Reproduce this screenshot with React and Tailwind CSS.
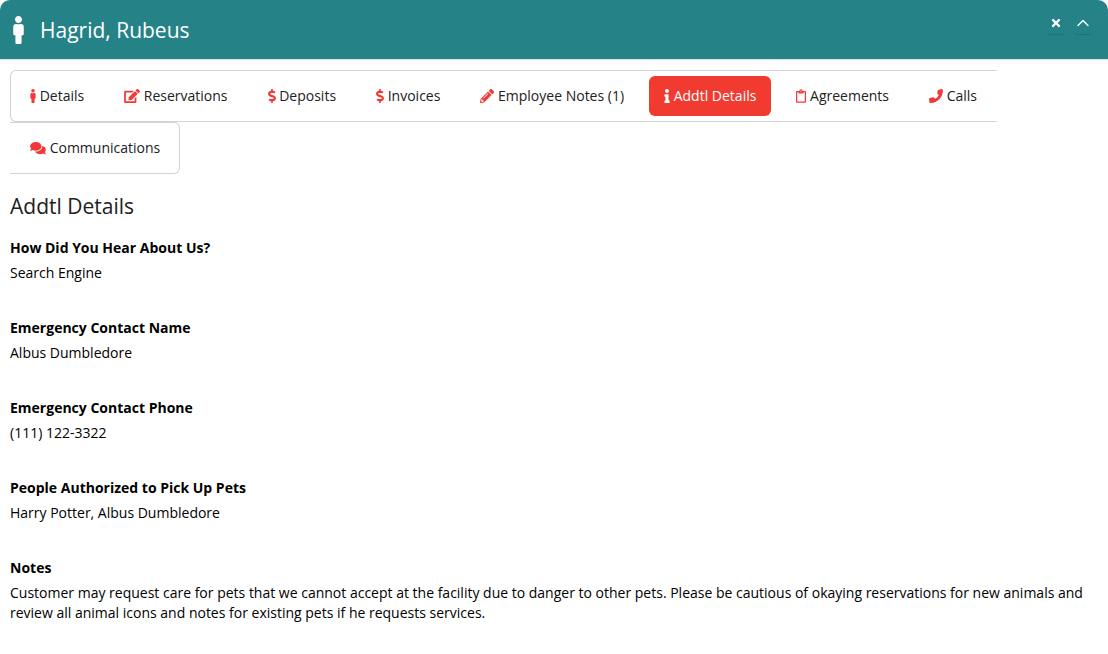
import { useState } from 'react'
import { ChevronUp } from 'lucide-react'
import {
  FaComments,
  FaDollarSign,
  FaEdit,
  FaInfo,
  FaMale,
  FaPencilAlt,
  FaRegClipboard,
  FaTimes
} from 'react-icons/fa'

// rounded handset
function PhoneIcon({ className }) {
  return (
    <svg viewBox="0 0 14 14" fill="currentColor" aria-hidden="true" className={className}>
      <path d="M9.2.9 12.8.1Q13.6 0 13.8.8C14.6 8 8 14.6 1.1 13.9Q.5 13.8.4 13.2L.1 10.2Q0 9.4.8 9.1L3.9 8.3Q4.5 8.1 4.9 8.6L6 9.8C7.9 8.9 9 7.7 9.7 6L8.6 4.9Q8.2 4.5 8.3 4L8.7 1.5Q8.8 1 9.2.9Z" />
    </svg>
  )
}

const tabs = [
  { id: 'details', label: 'Details', Icon: FaMale, width: 'w-[6px]' },
  { id: 'reservations', label: 'Reservations', Icon: FaEdit, width: 'w-4' },
  { id: 'deposits', label: 'Deposits', Icon: FaDollarSign, width: 'w-2' },
  { id: 'invoices', label: 'Invoices', Icon: FaDollarSign, width: 'w-2' },
  { id: 'notes', label: 'Employee Notes (1)', Icon: FaPencilAlt, width: 'w-[14px]' },
  { id: 'addtl', label: 'Addtl Details', Icon: FaInfo, width: 'w-[6px]' },
  { id: 'agreements', label: 'Agreements', Icon: FaRegClipboard, width: 'w-[10px]' },
  { id: 'calls', label: 'Calls', Icon: PhoneIcon, width: 'w-[14px]' },
  { id: 'communications', label: 'Communications', Icon: FaComments, width: 'w-4' }
]

const fields = [
  { label: 'How Did You Hear About Us?', value: 'Search Engine' },
  { label: 'Emergency Contact Name', value: 'Albus Dumbledore' },
  { label: 'Emergency Contact Phone', value: '(111) 122-3322' },
  { label: 'People Authorized to Pick Up Pets', value: 'Harry Potter, Albus Dumbledore' },
  {
    label: 'Notes',
    value:
      'Customer may request care for pets that we cannot accept at the facility due to danger to other pets. Please be cautious of okaying reservations for new animals and review all animal icons and notes for existing pets if he requests services.'
  }
]

export default function App() {
  const [activeTab, setActiveTab] = useState('addtl')
  const [open, setOpen] = useState(true)

  return (
    <div className="bg-white font-['Open_Sans',sans-serif] text-sm text-black">

      {/* Header */}
      <header className="flex items-start justify-between rounded-t-[10px] border-b border-[#d3e6e7] bg-[#258388] text-white">
        <div className="flex h-[59px] items-center pl-[13px]">
          <FaMale className="h-7 w-[11px]" />
          <h1 className="ml-4 text-[21px] leading-7">Hagrid, Rubeus</h1>
        </div>

        <div className="flex gap-[9px] pt-3 pr-4">
          <button
            type="button"
            aria-label="Close"
            className="flex h-[23px] w-[18px] items-center justify-center rounded-sm border-b border-[#1f7479]"
          >
            <FaTimes className="size-3" />
          </button>
          <button
            type="button"
            aria-label="Collapse"
            onClick={() => setOpen(!open)}
            className="flex h-[23px] w-[18px] items-center justify-center rounded-sm border-b border-[#1f7479]"
          >
            <ChevronUp className="size-5 shrink-0" strokeWidth={1.6} />
          </button>
        </div>
      </header>

      {open && (
        <main className="px-[10px] pt-[10px]">

          {/* Tabs */}
          <ul className="flex flex-wrap">
            {tabs.map(({ id, label, Icon, width }) => (
              <li
                key={id}
                className="border-y border-[#d3d3d3] px-[5px] py-[5px] first:rounded-l-md first:border-l first:pl-1 last:rounded-r-md last:border-r last:pr-1"
              >
                <button
                  type="button"
                  onClick={() => setActiveTab(id)}
                  className={
                    activeTab === id
                      ? 'h-10 rounded-md bg-[#f13a30] px-[15px] text-white'
                      : 'h-10 rounded-md px-[15px] text-[#212121]'
                  }
                >
                  <Icon
                    className={`inline h-[14px] align-[-2px] ${width} ${activeTab === id ? '' : 'text-[#f13a37]'}`}
                  />{' '}
                  {label}
                </button>
              </li>
            ))}
          </ul>

          <h2 className="mt-4 text-[21px] leading-8 text-[#212121]">Addtl Details</h2>

          {/* Fields */}
          <dl className="mt-4 space-y-[35px] leading-5">
            {fields.map(field => (
              <div key={field.label}>
                <dt className="font-bold">{field.label}</dt>
                <dd className="mt-[5px]">{field.value}</dd>
              </div>
            ))}
          </dl>

        </main>
      )}

    </div>
  )
}
